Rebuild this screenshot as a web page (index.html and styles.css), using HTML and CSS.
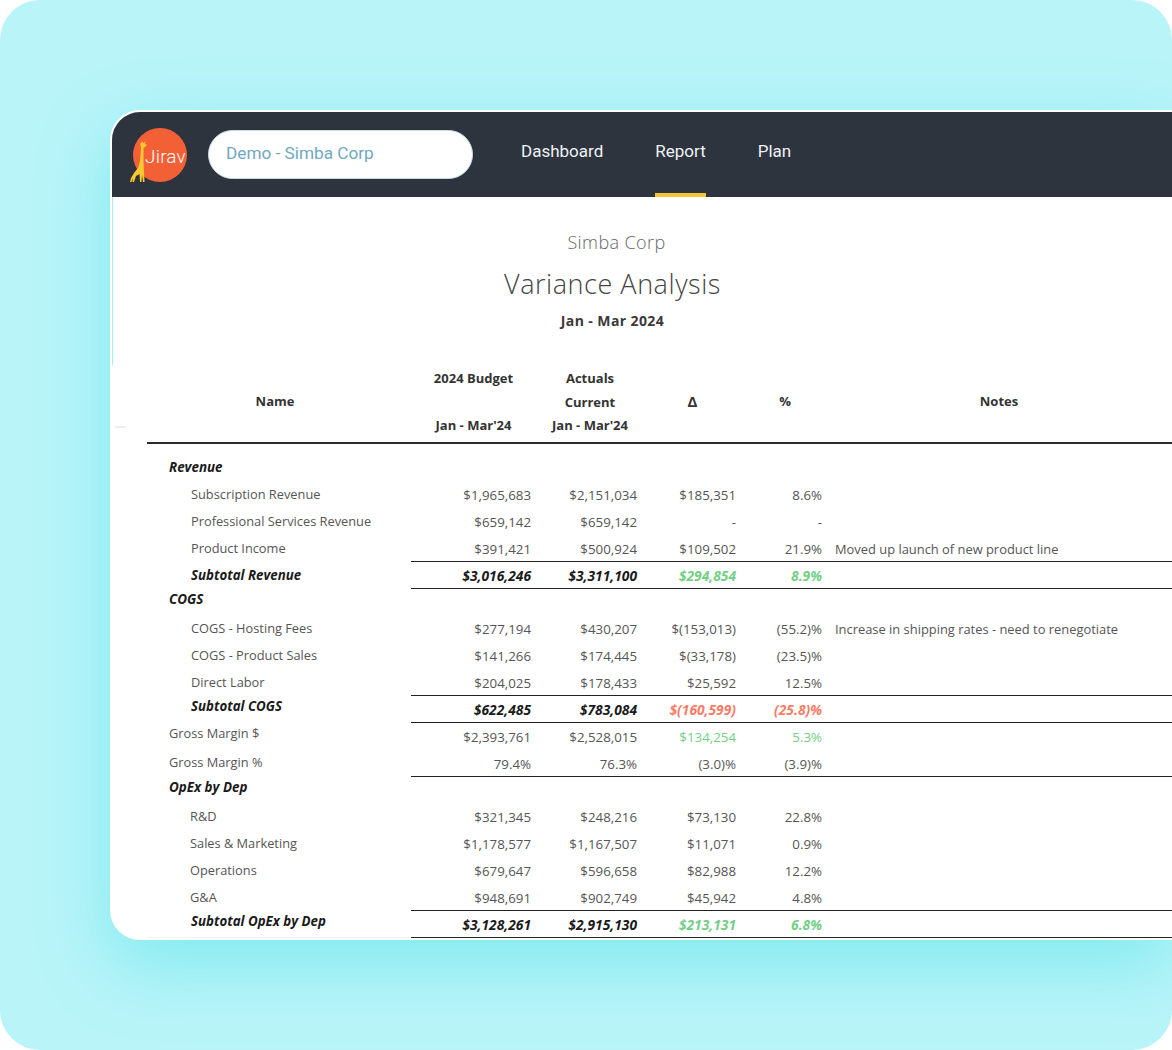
FILE: index.html
```html
<!DOCTYPE html>
<html lang="en">
<head>
  <meta charset="UTF-8" />
  <title>Variance Analysis</title>
  <link rel="stylesheet" href="styles.css">
</head>
<body>
  <div class="frame">
    <div class="card">
      <header class="topbar">
        <svg class="logo" viewBox="128 126 60 56" width="60" height="56">
          <circle cx="160" cy="154" r="27" fill="#f46036"/>
          <text x="145" y="162" class="logo-text">Jirav</text>
          <path fill="#fcc82e" d="M139.500 141l1.500 2 1-3 1 2 2.500-1.500-.5 2.500 2 1-2 2-1.500 1v13l.5 10 .5 11h-1.500l-1-7-.5 7h-1.500l-.5-8-3.500 2-2 6h-1.500l.5-4-1.500 4h-1.500l1-4 3-5 4-5 2-7 1-13-.5-3z"/>
        </svg>
        <div class="company-pill">Demo - Simba Corp</div>
        <nav class="main-nav">
          <a>Dashboard</a>
          <a class="active">Report</a>
          <a>Plan</a>
        </nav>
      </header>

      <main class="report">
        <span class="edge-mark"></span>
        <span class="edge-dash"></span>
        <div class="company">Simba Corp</div>
        <h1>Variance Analysis</h1>
        <div class="period">Jan - Mar 2024</div>

        <table>
          <colgroup>
            <col class="c-name"><col class="c-budget"><col class="c-actual"><col class="c-delta"><col class="c-pct"><col>
          </colgroup>
          <thead>
            <tr>
              <th class="th-name single">Name</th>
              <th class="th-budget"><div>2024 Budget</div><div>&nbsp;</div><div>Jan - Mar'24</div></th>
              <th><div>Actuals</div><div>Current</div><div>Jan - Mar'24</div></th>
              <th class="th-delta single">&Delta;</th>
              <th class="single">%</th>
              <th class="th-notes single">Notes</th>
            </tr>
          </thead>
          <tbody>
            <tr class="gap"><td colspan="6"></td></tr>

            <tr class="section"><td class="lbl nudge" colspan="6">Revenue</td></tr>
            <tr><td class="lbl item">Subscription Revenue</td><td>$1,965,683</td><td>$2,151,034</td><td>$185,351</td><td>8.6%</td><td></td></tr>
            <tr><td class="lbl item">Professional Services Revenue</td><td>$659,142</td><td>$659,142</td><td>-</td><td>-</td><td></td></tr>
            <tr class="before-total"><td class="lbl item">Product Income</td><td>$391,421</td><td>$500,924</td><td>$109,502</td><td>21.9%</td><td class="note">Moved up launch of new product line</td></tr>
            <tr class="total"><td class="lbl item">Subtotal Revenue</td><td>$3,016,246</td><td>$3,311,100</td><td class="good">$294,854</td><td class="good">8.9%</td><td></td></tr>

            <tr class="section"><td class="lbl up" colspan="6">COGS</td></tr>
            <tr><td class="lbl item">COGS - Hosting Fees</td><td>$277,194</td><td>$430,207</td><td>$(153,013)</td><td>(55.2)%</td><td class="note">Increase in shipping rates - need to renegotiate</td></tr>
            <tr><td class="lbl item">COGS - Product Sales</td><td>$141,266</td><td>$174,445</td><td>$(33,178)</td><td>(23.5)%</td><td></td></tr>
            <tr class="before-total"><td class="lbl item">Direct Labor</td><td>$204,025</td><td>$178,433</td><td>$25,592</td><td>12.5%</td><td></td></tr>
            <tr class="total"><td class="lbl item up-more">Subtotal COGS</td><td>$622,485</td><td>$783,084</td><td class="bad">$(160,599)</td><td class="bad">(25.8)%</td><td></td></tr>

            <tr><td class="lbl up-more">Gross Margin $</td><td>$2,393,761</td><td>$2,528,015</td><td class="good">$134,254</td><td class="good">5.3%</td><td></td></tr>
            <tr class="before-total"><td class="lbl nudge-more">Gross Margin %</td><td>79.4%</td><td>76.3%</td><td>(3.0)%</td><td>(3.9)%</td><td></td></tr>

            <tr class="section"><td class="lbl up" colspan="6">OpEx by Dep</td></tr>
            <tr><td class="lbl item dep">R&amp;D</td><td>$321,345</td><td>$248,216</td><td>$73,130</td><td>22.8%</td><td></td></tr>
            <tr><td class="lbl item dep">Sales &amp; Marketing</td><td>$1,178,577</td><td>$1,167,507</td><td>$11,071</td><td>0.9%</td><td></td></tr>
            <tr><td class="lbl item dep">Operations</td><td>$679,647</td><td>$596,658</td><td>$82,988</td><td>12.2%</td><td></td></tr>
            <tr class="before-total"><td class="lbl item dep">G&amp;A</td><td>$948,691</td><td>$902,749</td><td>$45,942</td><td>4.8%</td><td></td></tr>
            <tr class="total last"><td class="lbl item up">Subtotal OpEx by Dep</td><td>$3,128,261</td><td>$2,915,130</td><td class="good">$213,131</td><td class="good">6.8%</td><td></td></tr>
          </tbody>
        </table>
      </main>
    </div>
  </div>
</body>
</html>
```

FILE: styles.css
```css
* { box-sizing: border-box; }
body { margin: 0; background: #fff; font-family: "Open Sans", sans-serif; }

.frame { width: 1172px; height: 1050px; padding: 110px 0 0 110px; background: #b8f4f8; border-radius: 40px; overflow: hidden; }
.card { height: 830px; background: #fff; border: 2px solid #fff; border-right: none; border-bottom: none; border-radius: 30px 0 0 30px; box-shadow: 0 25px 70px #80eaef; overflow: hidden; }

.topbar { height: 85px; background: #2d343e; display: flex; align-items: center; padding-left: 16px; font-family: Roboto, sans-serif; }
.logo { flex: none; }
.logo-text { font-family: Roboto, sans-serif; font-weight: 300; font-size: 19px; letter-spacing: .2px; fill: #fff; }
.company-pill { width: 265px; height: 49px; margin-left: 20px; padding-left: 17px; background: #fff; border: 1px solid #c9dde3; border-radius: 25px; color: #6fa9bf; font-size: 17.2px; line-height: 45px; }
.main-nav { display: flex; align-self: stretch; gap: 52px; margin-left: 48px; }
.main-nav a { display: flex; align-items: center; padding-bottom: 3px; border-bottom: 4px solid transparent; color: #eef2f5; font-size: 17px; }
.main-nav a.active { border-bottom-color: #f7c53c; }

.report { position: relative; padding: 33px 0 0 35px; }
.edge-mark { position: absolute; left: 0; top: 0; width: 1px; height: 168px; background: #a6f0f4; }
.edge-dash { position: absolute; left: 3px; top: 229px; width: 11px; height: 2px; background: #eee; }

.company { padding-left: 8px; margin-right: 94px; text-align: center; font-weight: 300; font-size: 18px; letter-spacing: .4px; line-height: 24px; color: #666; }
h1 { margin: 13px 94px 0 0; text-align: center; font-weight: 300; font-size: 27px; letter-spacing: .55px; line-height: 34px; color: #444; }
.period { margin: 10px 94px 35px 0; text-align: center; font-weight: 700; font-size: 14px; letter-spacing: .4px; line-height: 20px; color: #3a3a3a; }

table { width: 1025px; table-layout: fixed; border-collapse: separate; border-spacing: 0; font-size: 13.3px; color: #555; }
.c-name { width: 264px; }
.c-budget { width: 120px; }
.c-actual { width: 106px; }
.c-delta { width: 99px; }
.c-pct { width: 86px; }

th { padding: 1px 0 4.5px 12px; border-bottom: 2px solid #2b2b2b; text-align: center; font-weight: 700; font-size: 13px; line-height: 23.5px; color: #333; }
.th-budget { padding-left: 5px; }
.th-delta { font-size: 15px; }
.th-notes { padding-left: 4px; }
.th-name { padding-left: 0; padding-right: 8px; }
th.single { padding-bottom: 6.5px; }

td { height: 27px; padding: 0; text-align: right; white-space: nowrap; }
td.lbl { padding-left: 22px; text-align: left; font-size: 12.8px; }
td.item { padding-left: 44px; padding-bottom: 2px; }
td.dep { padding-left: 43px; }
td.nudge { padding-bottom: 2px; }
td.nudge-more { padding-bottom: 4px; }
td.up { padding-bottom: 6px; }
td.up-more { padding-bottom: 8px; }
td.note { padding-left: 13px; text-align: left; font-size: 12.9px; }
.gap td { height: 11px; }
.section td { height: 26px; font-weight: 700; font-style: italic; color: #1a1a1a; }
.section td.lbl { font-size: 13.4px; }

.before-total td { border-bottom: 1px solid #222; padding-top: 1px; }
.before-total td:first-child { border-bottom: none; padding-top: 0; }
.total td { border-bottom: 1px solid #222; font-weight: 700; font-style: italic; font-size: 13.8px; color: #1a1a1a; }
.total td.lbl { font-size: 13.3px; }
.total td:first-child { border-bottom: none; }
.total.last td:first-child { border-bottom: 1px solid #eef3f5; }

td.good { color: #72cf85; }
td.bad { color: #f77c66; }
```
